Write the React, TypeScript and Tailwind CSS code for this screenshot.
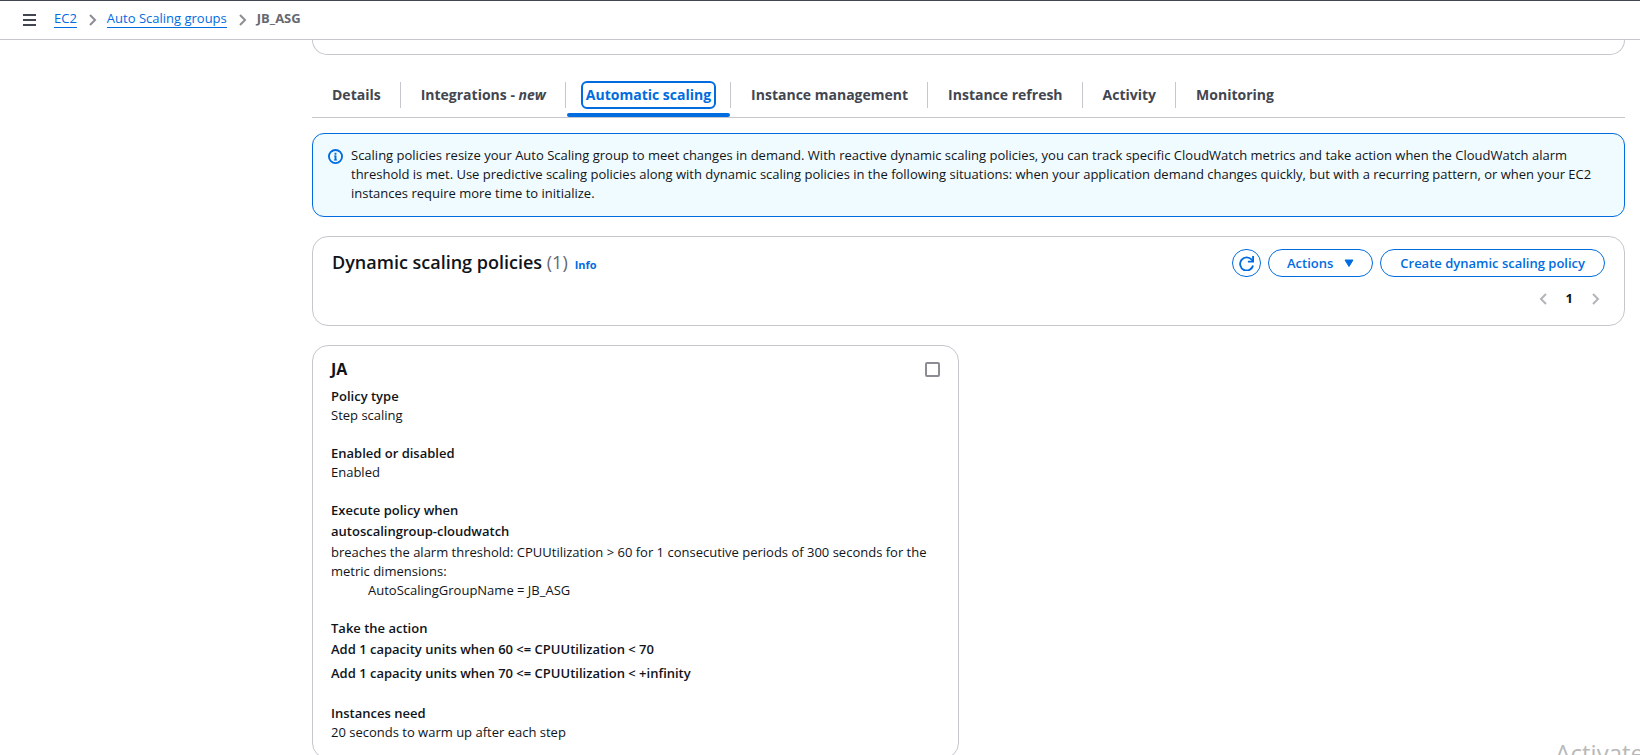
import React from "react";

function Chevron({ left = false, className = "" }: { left?: boolean; className?: string }) {
  return (
    <svg viewBox="0 0 8 12" className={`h-3 w-2 shrink-0 ${className}`} fill="none" stroke="currentColor" strokeWidth="2" aria-hidden="true">
      <path d={left ? "M7 1 2 6l5 5" : "M1 1l5 5-5 5"} />
    </svg>
  );
}

function Breadcrumbs() {
  return (
    <header className="flex h-10 shrink-0 items-center border-t border-b border-t-[#424650] border-b-[#c6c6cd] bg-white pb-1 pl-[23px]">
      <button type="button" aria-label="Open navigation" className="mt-1 mr-[18px] text-[#424650]">
        <svg viewBox="0 0 13 12" className="h-3 w-[13px]" fill="none" stroke="currentColor" strokeWidth="2" aria-hidden="true">
          <path d="M0 1h13M0 6h13M0 11h13" />
        </svg>
      </button>
      <nav aria-label="Breadcrumbs">
        <ol className="flex items-center gap-3">
          <li>
            <a href="#ec2" className="block border-b border-[#006ce0] leading-[18px] text-[#006ce0]">EC2</a>
          </li>
          <li className="flex items-center gap-[10px]">
            <Chevron className="mt-1 text-[#8c8c94]" />
            <a href="#groups" className="block border-b border-[#006ce0] leading-[18px] text-[#006ce0]">Auto Scaling groups</a>
          </li>
          <li className="flex items-center gap-[10px]">
            <Chevron className="mt-1 text-[#8c8c94]" />
            <span aria-current="page" className="border-b border-transparent leading-[18px] font-bold text-[#656871]">JB_ASG</span>
          </li>
        </ol>
      </nav>
    </header>
  );
}

const tabs: { id: string; label: React.ReactNode; active?: boolean }[] = [
  { id: "details", label: "Details" },
  { id: "integrations", label: <>Integrations - <i>new</i></> },
  { id: "scaling", label: "Automatic scaling", active: true },
  { id: "instances", label: "Instance management" },
  { id: "refresh", label: "Instance refresh" },
  { id: "activity", label: "Activity" },
  { id: "monitoring", label: "Monitoring" },
];

function Tabs() {
  return (
    <div role="tablist" className="mt-[26px] flex border-b border-[#c6c6cd] text-sm font-bold text-[#424650]">
      {tabs.map((tab, i) => (
        <div key={tab.id} role="presentation" className="flex">
          {i > 0 && <span className="mt-px h-[26px] w-px bg-[#c6c6cd]" />}
          <div className="flex flex-col gap-1 pl-px">
            <div className="px-[14px]">
              <button
                type="button"
                role="tab"
                aria-selected={!!tab.active}
                className={
                  tab.active
                    ? "h-7 rounded-md border-2 border-[#006ce0] px-[3px] leading-6 text-[#006ce0]"
                    : "h-7 border-2 border-transparent px-[3px] leading-6"
                }
              >
                {tab.label}
              </button>
            </div>
            <span className={tab.active ? "h-1 rounded-sm bg-[#006ce0]" : "h-1"} />
          </div>
        </div>
      ))}
    </div>
  );
}

function InfoAlert() {
  return (
    <div className="mt-[15px] flex gap-2 rounded-xl border border-[#006ce0] bg-[#f0fbff] pt-3 pr-4 pb-[13px] pl-[15px]">
      <svg viewBox="0 0 16 16" className="mt-[3px] size-[15px] shrink-0 text-[#006ce0]" fill="none" stroke="currentColor" strokeWidth="2" aria-hidden="true">
        <circle cx="8" cy="8" r="7" />
        <path d="M8 7v5M8 4v2" />
        <path d="M6.5 7.5H8M6.3 11.7h3.4" strokeWidth="1" />
      </svg>
      <p>
        Scaling policies resize your Auto Scaling group to meet changes in demand. With reactive dynamic scaling policies, you can track specific CloudWatch metrics and take action when the CloudWatch alarm threshold is met. Use predictive scaling policies along with dynamic scaling policies in the following situations: when your application demand changes quickly, but with a recurring pattern, or when your EC2 instances require more time to initialize.
      </p>
    </div>
  );
}

function PoliciesHeader() {
  return (
    <section className="mt-[19px] rounded-2xl border border-[#c6c6cd] bg-white px-[19px] pt-3 pb-[17px]">
      <div className="flex items-start justify-between">
        <div className="flex items-baseline gap-[7px]">
          <h2 className="text-lg leading-[26px] font-semibold">
            Dynamic scaling policies <span className="font-normal text-[#656871]">(1)</span>
          </h2>
          <a href="#info" className="text-[11px] font-bold text-[#006ce0]">Info</a>
        </div>
        <div className="flex gap-[7px] font-semibold text-[#006ce0]">
          <button type="button" aria-label="Refresh" className="flex h-7 w-[29px] items-center justify-center rounded-full border border-[#006ce0]">
            <svg viewBox="0 0 16 16" className="size-[15px]" fill="none" stroke="currentColor" strokeWidth="2" aria-hidden="true">
              <path d="M15 10.2A7 7 0 1 1 13.6 4l1.4 1.6" />
              <path d="M15 0v6H9.500" />
            </svg>
          </button>
          <button type="button" className="flex h-7 items-center gap-[11px] rounded-full border border-[#006ce0] px-[18px] leading-[26px]">
            Actions
            <svg viewBox="0 0 10 8" className="h-2 w-[10px]" fill="currentColor" stroke="currentColor" strokeLinejoin="round" aria-hidden="true">
              <path d="M1 1h8L5 7.500z" />
            </svg>
          </button>
          <button type="button" className="h-7 rounded-full border border-[#006ce0] px-[19px] leading-[26px]">Create dynamic scaling policy</button>
        </div>
      </div>
      <nav aria-label="Pagination" className="mt-3 flex items-center justify-end gap-[19px] pr-[5px]">
        <button type="button" aria-label="Previous page" className="text-[#b4b4bb]"><Chevron left /></button>
        <span aria-current="page" className="font-bold">1</span>
        <button type="button" aria-label="Next page" className="text-[#b4b4bb]"><Chevron /></button>
      </nav>
    </section>
  );
}

function Field({ label, children }: { label: string; children: React.ReactNode }) {
  return (
    <div>
      <dt className="font-semibold">{label}</dt>
      <dd>{children}</dd>
    </div>
  );
}

function PolicyCard() {
  return (
    <section className="rounded-2xl border border-[#c6c6cd] bg-white px-[18px] pt-[13px] pb-4">
      <div className="flex items-center justify-between">
        <h3 className="text-base leading-5 font-bold"><label htmlFor="policy-ja">JA</label></h3>
        <input id="policy-ja" type="checkbox" className="size-[15px] appearance-none rounded-xs border-2 border-[#8c8c94] bg-white" />
      </div>
      <dl className="mt-2 flex flex-col gap-[19px]">
        <Field label="Policy type">Step scaling</Field>
        <Field label="Enabled or disabled">Enabled</Field>
        <Field label="Execute policy when">
          <p className="py-0.5 font-semibold">autoscalingroup-cloudwatch</p>
          <p>breaches the alarm threshold: CPUUtilization &gt; 60 for 1 consecutive periods of 300 seconds for the metric dimensions:</p>
          <p className="pl-[37px]">AutoScalingGroupName = JB_ASG</p>
        </Field>
        <Field label="Take the action">
          <div className="flex flex-col gap-px font-semibold">
            <p className="py-0.5">Add 1 capacity units when 60 &lt;= CPUUtilization &lt; 70</p>
            <p className="py-0.5">Add 1 capacity units when 70 &lt;= CPUUtilization &lt; +infinity</p>
          </div>
        </Field>
        <Field label="Instances need">20 seconds to warm up after each step</Field>
      </dl>
    </section>
  );
}

export default function App() {
  return (
    <div className="relative flex h-screen flex-col overflow-hidden bg-white font-['Open_Sans','Noto_Sans',sans-serif] text-[13px] leading-[19px] text-[#0f141a]">
      <Breadcrumbs />
      <main className="min-h-0 flex-1 overflow-hidden pr-[15px] pl-[312px]">
        <div className="h-[15px] rounded-b-2xl border-x border-b border-[#c6c6cd]" />
        <Tabs />
        <InfoAlert />
        <PoliciesHeader />
        <div className="mt-[19px] grid grid-cols-2 gap-[19px]">
          <PolicyCard />
        </div>
      </main>
      <div className="pointer-events-none absolute -right-1 -bottom-[14px] text-2xl leading-8 text-[#b9b9b9]">Activate</div>
    </div>
  );
}
